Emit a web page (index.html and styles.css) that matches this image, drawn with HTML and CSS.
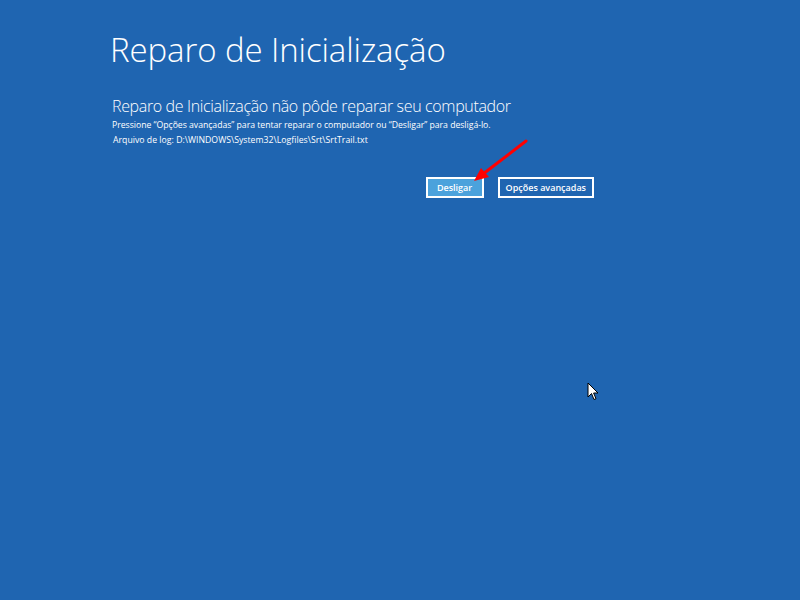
FILE: index.html
```html
<!DOCTYPE html>
<html lang="pt-BR">
<head>
<meta charset="utf-8">
<title>Reparo de Inicialização</title>
<link rel="stylesheet" href="styles.css">
</head>
<body>
<main class="screen">
  <div class="panel">
    <h1 class="title">Reparo de Inicialização</h1>
    <h2 class="subtitle">Reparo de Inicialização não pôde reparar seu computador</h2>
    <p class="info">Pressione “Opções avançadas” para tentar reparar o computador ou “Desligar” para desligá-lo.</p>
    <p class="info log">Arquivo de log: D:\WINDOWS\System32\Logfiles\Srt\SrtTrail.txt</p>
    <div class="actions">
      <button class="btn btn-primary">Desligar</button>
      <button class="btn">Opções avançadas</button>
    </div>
  </div>
  <svg class="arrow" width="60" height="50" viewBox="0 0 60 50">
    <line x1="56" y1="4" x2="13" y2="37" stroke="#ff0000" stroke-width="3" stroke-linecap="round"/>
    <polygon points="4,44 11,31 19,40" fill="#ff0000"/>
  </svg>
  <svg class="cursor" width="14" height="20" viewBox="0 0 14 20">
    <path d="M1 1 L1 15 L4.5 11.5 L7 17.5 L9 16.7 L6.6 11 L11 11 Z" fill="#ffffff" stroke="#000000" stroke-width="1"/>
  </svg>
</main>
</body>
</html>
```
FILE: styles.css
```css
html, body {
  margin: 0;
  padding: 0;
}
body {
  background: #1f65b1;
  width: 800px;
  height: 600px;
  overflow: hidden;
  font-family: "Open Sans", "Noto Sans", sans-serif;
  color: #ffffff;
}
.screen {
  position: relative;
  width: 800px;
  height: 600px;
}
.panel {
  width: 484px;
  padding: 26px 0 0 110px;
}
.title {
  margin: 0;
  font-weight: 300;
  font-size: 33px;
  line-height: 48px;
  letter-spacing: -0.1px;
}
.subtitle {
  margin: 21px 0 0 2px;
  font-weight: 300;
  font-size: 16px;
  line-height: 22px;
  letter-spacing: -0.35px;
}
.info {
  margin: 0 0 0 2px;
  font-size: 8.7px;
  line-height: 15px;
  letter-spacing: -0.03px;
}
.info:first-of-type {
  margin-top: 1px;
}
.log {
  margin-left: 3px;
  letter-spacing: 0.02px;
}
.actions {
  display: flex;
  justify-content: flex-end;
  gap: 14px;
  margin-top: 29px;
}
.btn {
  font-family: inherit;
  font-size: 9px;
  font-weight: 600;
  color: #ffffff;
  background: transparent;
  border: 2px solid #ffffff;
  height: 21px;
  padding: 0 6px;
  line-height: 17px;
}
.btn-primary {
  background: #4ba2dc;
  width: 58px;
}
.arrow {
  position: absolute;
  left: 470px;
  top: 137px;
}
.cursor {
  position: absolute;
  left: 587px;
  top: 382px;
}
```
